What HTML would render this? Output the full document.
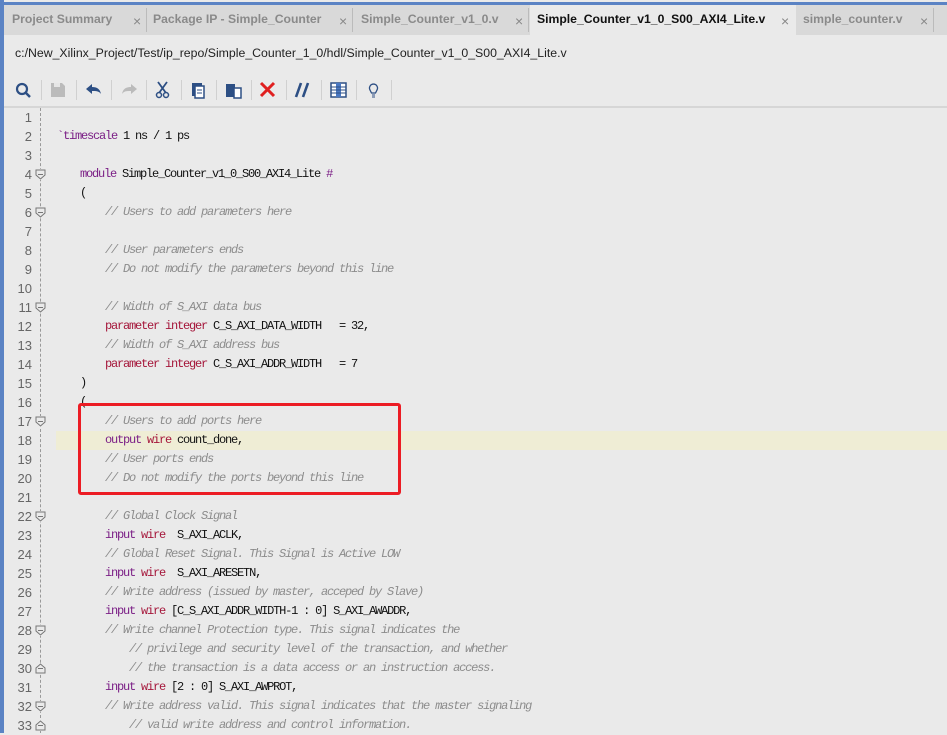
<!DOCTYPE html><html><head><style>
*{margin:0;padding:0;box-sizing:border-box}
body{width:947px;height:733px;background:#eaeaea;font-family:"Liberation Sans",sans-serif;position:relative;overflow:hidden}
.lb{position:absolute;left:0;top:0;width:4px;height:733px;background:#5b83c4}
.tb{position:absolute;left:0;top:2px;width:947px;height:3px;background:#5b83c4}
.tabs{position:absolute;left:4px;top:5px;width:943px;height:30px;background:#d9d9d9}
.tab{position:absolute;top:5px;height:30px;font-size:12.2px;font-weight:bold;color:#8a8a8a;line-height:29px}
.x{position:absolute;top:5px;font-size:14px;color:#888;line-height:32px}
.sep{position:absolute;top:8px;width:1px;height:24px;background:#bbb}
.path{position:absolute;left:15px;top:46px;font-size:12.3px;color:#222}
.ic{position:absolute;top:80px}
.tsep{position:absolute;top:80px;width:1px;height:20px;background:#d0d0d0}
.tdiv{position:absolute;left:4px;top:106px;width:943px;height:2px;background:#d6d6d6}
.ln{position:absolute;left:0;width:32px;text-align:right;font-family:"Liberation Sans",sans-serif;font-size:13px;color:#666;height:19px;line-height:19px}
.c{position:absolute;font-family:"Liberation Mono",monospace;font-size:12px;letter-spacing:-1.2px;color:#111;white-space:pre;height:19px;line-height:19px}
.k{color:#7b1f86}.w{color:#a5163a}.cm{color:#8c8c8c;font-style:italic}
.dash{position:absolute;left:40px;top:108px;height:625px;border-left:1px dashed #999}
.fd{position:absolute;left:35px;width:11px;height:11px;background:#eaeaea}
</style></head><body>
<div class="tabs"></div>
<div style="position:absolute;left:530px;top:5px;width:266px;height:30px;background:#eaeaea"></div>
<div class="tb"></div><div class="lb"></div>
<div class="tab" style="left:12px">Project Summary</div><div class="x" style="left:133px">×</div><div class="sep" style="left:146px"></div>
<div class="tab" style="left:153px">Package IP - Simple_Counter</div><div class="x" style="left:339px">×</div><div class="sep" style="left:352px"></div>
<div class="tab" style="left:361px">Simple_Counter_v1_0.v</div><div class="x" style="left:515px">×</div><div class="sep" style="left:528px"></div>
<div class="tab" style="left:537px;color:#111">Simple_Counter_v1_0_S00_AXI4_Lite.v</div><div class="x" style="left:781px">×</div>
<div class="tab" style="left:803px">simple_counter.v</div><div class="x" style="left:920px">×</div><div class="sep" style="left:933px"></div>
<div class="path">c:/New_Xilinx_Project/Test/ip_repo/Simple_Counter_1_0/hdl/Simple_Counter_v1_0_S00_AXI4_Lite.v</div>
<svg class="ic" style="left:14px" width="20" height="20"><circle cx="8" cy="9" r="5" fill="none" stroke="#2d4f84" stroke-width="2.2"/><path d="M11 12l5 5" stroke="#2d4f84" stroke-width="2.5"/></svg>
<div class="tsep" style="left:41px"></div>
<svg class="ic" style="left:50px" width="20" height="20"><path d="M1 3h11l3 3v11H1z" fill="#bbb"/><rect x="4" y="3" width="6" height="4" fill="#e6e6e6"/></svg>
<div class="tsep" style="left:76px"></div>
<svg class="ic" style="left:84px" width="20" height="20"><path d="M2 9l6-5v3c5 0 8 2 9 7c-2-3-5-3-9-3v3z" fill="#2d4f84"/></svg>
<div class="tsep" style="left:111px"></div>
<svg class="ic" style="left:119px" width="20" height="20"><path d="M18 9l-6-5v3c-5 0-8 2-9 7c2-3 5-3 9-3v3z" fill="#bbb"/></svg>
<div class="tsep" style="left:146px"></div>
<svg class="ic" style="left:153px" width="20" height="20"><path d="M5 2l8 11M14 2l-8 11" stroke="#2d4f84" stroke-width="1.8"/><circle cx="6" cy="15" r="2.5" fill="none" stroke="#2d4f84" stroke-width="1.5"/><circle cx="13" cy="15" r="2.5" fill="none" stroke="#2d4f84" stroke-width="1.5"/></svg>
<div class="tsep" style="left:181px"></div>
<svg class="ic" style="left:189px" width="20" height="20"><rect x="3" y="3" width="10" height="13" fill="#2d4f84"/><rect x="6" y="6" width="9" height="12" fill="#fff" stroke="#2d4f84" stroke-width="1.5"/><path d="M8 10h5M8 13h5" stroke="#2d4f84"/></svg>
<div class="tsep" style="left:216px"></div>
<svg class="ic" style="left:224px" width="20" height="20"><rect x="2" y="4" width="9" height="13" fill="#2d4f84"/><rect x="10" y="8" width="7" height="10" fill="#fff" stroke="#2d4f84" stroke-width="1.5"/></svg>
<div class="tsep" style="left:251px"></div>
<svg class="ic" style="left:258px" width="20" height="20"><path d="M3 3l13 13M16 3L3 16" stroke="#e02020" stroke-width="3"/></svg>
<div class="tsep" style="left:286px"></div>
<svg class="ic" style="left:293px" width="20" height="20"><path d="M8 3l-5 14M15 3l-5 14" stroke="#2d4f84" stroke-width="2.6"/></svg>
<div class="tsep" style="left:321px"></div>
<svg class="ic" style="left:329px" width="20" height="20"><rect x="2" y="3" width="15" height="14" fill="#fff" stroke="#2d4f84" stroke-width="1.5"/><rect x="7" y="3" width="5" height="14" fill="#4a78c2"/><path d="M2 7h15M2 10h15M2 13h15" stroke="#2d4f84"/></svg>
<div class="tsep" style="left:356px"></div>
<svg class="ic" style="left:364px" width="20" height="20"><path d="M6 10a4 4 0 1 1 7 0l-1.5 3h-4z" fill="none" stroke="#2d4f84" stroke-width="1.3"/><path d="M8 15h3M8 17h3" stroke="#2d4f84"/></svg>
<div class="tsep" style="left:391px"></div>
<div class="tdiv"></div>
<div style="position:absolute;left:56px;top:431px;width:891px;height:19px;background:#efedd5"></div>
<div class="dash"></div>
<div id="code"></div>
<div style="position:absolute;left:78px;top:403px;width:323px;height:92px;border:3px solid #ec1c24;border-radius:3px"></div>
<script>
var L=[
[0,''],[57,'<span class="k">`timescale</span> 1 ns / 1 ps'],[0,''],
[80,'<span class="k">module</span> Simple_Counter_v1_0_S00_AXI4_Lite <span class="k">#</span>',1],
[80,'('],[105,'<span class="cm">// Users to add parameters here</span>',1],[0,''],
[105,'<span class="cm">// User parameters ends</span>'],
[105,'<span class="cm">// Do not modify the parameters beyond this line</span>'],[0,''],
[105,'<span class="cm">// Width of S_AXI data bus</span>',1],
[105,'<span class="w">parameter integer</span> C_S_AXI_DATA_WIDTH   = 32,'],
[105,'<span class="cm">// Width of S_AXI address bus</span>'],
[105,'<span class="w">parameter integer</span> C_S_AXI_ADDR_WIDTH   = 7'],
[80,')'],[80,'('],
[105,'<span class="cm">// Users to add ports here</span>',1],
[105,'<span class="k">output</span> <span class="w">wire</span> count_done,'],
[105,'<span class="cm">// User ports ends</span>'],
[105,'<span class="cm">// Do not modify the ports beyond this line</span>'],[0,''],
[105,'<span class="cm">// Global Clock Signal</span>',1],
[105,'<span class="k">input</span> <span class="w">wire</span>  S_AXI_ACLK,'],
[105,'<span class="cm">// Global Reset Signal. This Signal is Active LOW</span>'],
[105,'<span class="k">input</span> <span class="w">wire</span>  S_AXI_ARESETN,'],
[105,'<span class="cm">// Write address (issued by master, acceped by Slave)</span>'],
[105,'<span class="k">input</span> <span class="w">wire</span> [C_S_AXI_ADDR_WIDTH-1 : 0] S_AXI_AWADDR,'],
[105,'<span class="cm">// Write channel Protection type. This signal indicates the</span>',1],
[129,'<span class="cm">// privilege and security level of the transaction, and whether</span>'],
[129,'<span class="cm">// the transaction is a data access or an instruction access.</span>',2],
[105,'<span class="k">input</span> <span class="w">wire</span> [2 : 0] S_AXI_AWPROT,'],
[105,'<span class="cm">// Write address valid. This signal indicates that the master signaling</span>',1],
[129,'<span class="cm">// valid write address and control information.</span>',2]];
var h='';
L.forEach(function(l,i){var t=108+19*i;
h+='<div class="ln" style="top:'+t+'px">'+(i+1)+'</div>';
if(l[2]){h+='<svg class="fd" style="top:'+(t+4)+'px" width="11" height="11" viewBox="0 0 11 11">'+(l[2]==1?'<path d="M1 1h9v5l-4.5 4l-4.5-4z" fill="#eaeaea" stroke="#777"/>':'<path d="M1 10h9v-5l-4.5-4l-4.5 4z" fill="#eaeaea" stroke="#777"/>')+'<path d="M3 5.5h5" stroke="#777"/></svg>';}
if(l[0])h+='<div class="c" style="left:'+l[0]+'px;top:'+t+'px">'+l[1]+'</div>';});
document.getElementById('code').innerHTML=h;
</script>
</body></html>
